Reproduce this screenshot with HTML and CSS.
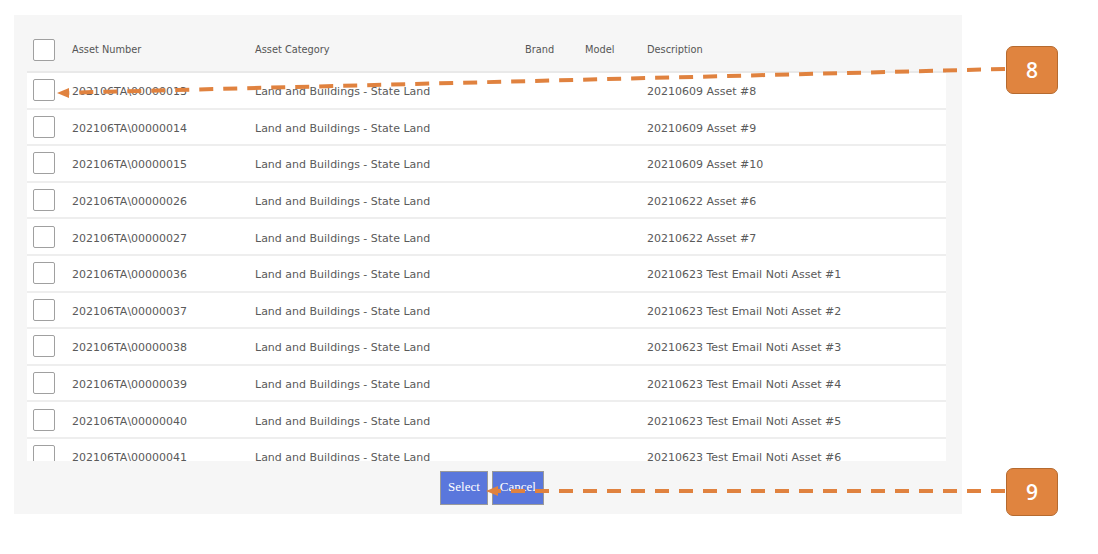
FILE: index.html
```html
<!DOCTYPE html>
<html>
<head>
<meta charset="utf-8">
<link rel="stylesheet" href="styles.css">
</head>
<body>
<div class="page">
  <div class="panel">
    <div class="row head">
      <span class="cb"></span>
      <span>Asset Number</span>
      <span>Asset Category</span>
      <span>Brand</span>
      <span>Model</span>
      <span>Description</span>
    </div>
    <div class="scroll">
      <div class="row"><span class="cb"></span><span>202106TA\00000013</span><span>Land and Buildings - State Land</span><span></span><span></span><span>20210609 Asset #8</span></div>
      <div class="row"><span class="cb"></span><span>202106TA\00000014</span><span>Land and Buildings - State Land</span><span></span><span></span><span>20210609 Asset #9</span></div>
      <div class="row"><span class="cb"></span><span>202106TA\00000015</span><span>Land and Buildings - State Land</span><span></span><span></span><span>20210609 Asset #10</span></div>
      <div class="row"><span class="cb"></span><span>202106TA\00000026</span><span>Land and Buildings - State Land</span><span></span><span></span><span>20210622 Asset #6</span></div>
      <div class="row"><span class="cb"></span><span>202106TA\00000027</span><span>Land and Buildings - State Land</span><span></span><span></span><span>20210622 Asset #7</span></div>
      <div class="row"><span class="cb"></span><span>202106TA\00000036</span><span>Land and Buildings - State Land</span><span></span><span></span><span>20210623 Test Email Noti Asset #1</span></div>
      <div class="row"><span class="cb"></span><span>202106TA\00000037</span><span>Land and Buildings - State Land</span><span></span><span></span><span>20210623 Test Email Noti Asset #2</span></div>
      <div class="row"><span class="cb"></span><span>202106TA\00000038</span><span>Land and Buildings - State Land</span><span></span><span></span><span>20210623 Test Email Noti Asset #3</span></div>
      <div class="row"><span class="cb"></span><span>202106TA\00000039</span><span>Land and Buildings - State Land</span><span></span><span></span><span>20210623 Test Email Noti Asset #4</span></div>
      <div class="row"><span class="cb"></span><span>202106TA\00000040</span><span>Land and Buildings - State Land</span><span></span><span></span><span>20210623 Test Email Noti Asset #5</span></div>
      <div class="row"><span class="cb"></span><span>202106TA\00000041</span><span>Land and Buildings - State Land</span><span></span><span></span><span>20210623 Test Email Noti Asset #6</span></div>
    </div>
    <div class="footer">
      <button class="btn">Select</button>
      <button class="btn">Cancel</button>
    </div>
  </div>
</div>
<svg class="overlay" width="1098" height="554" viewBox="0 0 1098 554">
  <line x1="1005" y1="69" x2="66" y2="92.8" stroke="#e0823f" stroke-width="4" stroke-dasharray="14 10"/>
  <polygon points="57,93 69,88 69,98" fill="#e0823f"/>
  <line x1="1005" y1="491" x2="496" y2="491" stroke="#e0823f" stroke-width="4" stroke-dasharray="14 10"/>
  <polygon points="486,491 498,486 498,496" fill="#e0823f"/>
</svg>
<div class="badge b8">8</div>
<div class="badge b9">9</div>
</body>
</html>
```
FILE: styles.css
```css
html, body {
  margin: 0;
  padding: 0;
  background: #ffffff;
}
body {
  width: 1098px;
  height: 554px;
  position: relative;
  overflow: hidden;
  font-family: "DejaVu Sans", Verdana, sans-serif;
}
.page {
  padding: 15px 0 0 14px;
}
.panel {
  width: 948px;
  height: 499px;
  background: #f6f6f6;
  display: flex;
  flex-direction: column;
}
.row {
  display: grid;
  grid-template-columns: 39px 183px 270px 60px 62px 1fr;
  align-items: center;
  margin: 0 16px 0 13px;
  padding: 3px 0 0 6px;
  box-sizing: border-box;
  height: 36.6px;
  background: #ffffff;
  border-bottom: 2px solid #eeeeee;
  font-size: 11px;
  color: #5a5a5a;
  white-space: nowrap;
}
.row .cb {
  margin-top: -3px;
}
.row.head {
  background: #f6f6f6;
  height: 58px;
  padding-top: 12px;
  font-size: 9.8px;
  color: #555555;
  border-bottom: 2px solid #e9e9e9;
}
.row.head .cb {
  margin-top: 2px;
}
.cb {
  width: 20px;
  height: 20px;
  border: 1.5px solid #a0a0a0;
  border-radius: 2px;
  background: #ffffff;
}
.scroll {
  height: 388px;
  overflow: hidden;
}
.footer {
  flex: 1;
  display: flex;
  justify-content: center;
  align-items: center;
  gap: 4px;
  padding-left: 8px;
  padding-top: 1px;
}
.btn {
  height: 34px;
  padding: 0 7px 3px;
  background: #5a77dc;
  border: 1px solid #9a9a9a;
  color: #ffffff;
  font-family: "Liberation Serif", "Times New Roman", serif;
  font-size: 13px;
}
.overlay {
  position: absolute;
  left: 0;
  top: 0;
}
.badge {
  position: absolute;
  left: 1006px;
  width: 50px;
  height: 46px;
  background: #e0843f;
  border: 1px solid #b56a2f;
  border-radius: 7px;
  color: #ffffff;
  font-family: "Open Sans", "DejaVu Sans", sans-serif;
  font-size: 21px;
  font-weight: 600;
  display: flex;
  align-items: center;
  justify-content: center;
}
.b8 { top: 46px; }
.b9 { top: 468px; }
```
